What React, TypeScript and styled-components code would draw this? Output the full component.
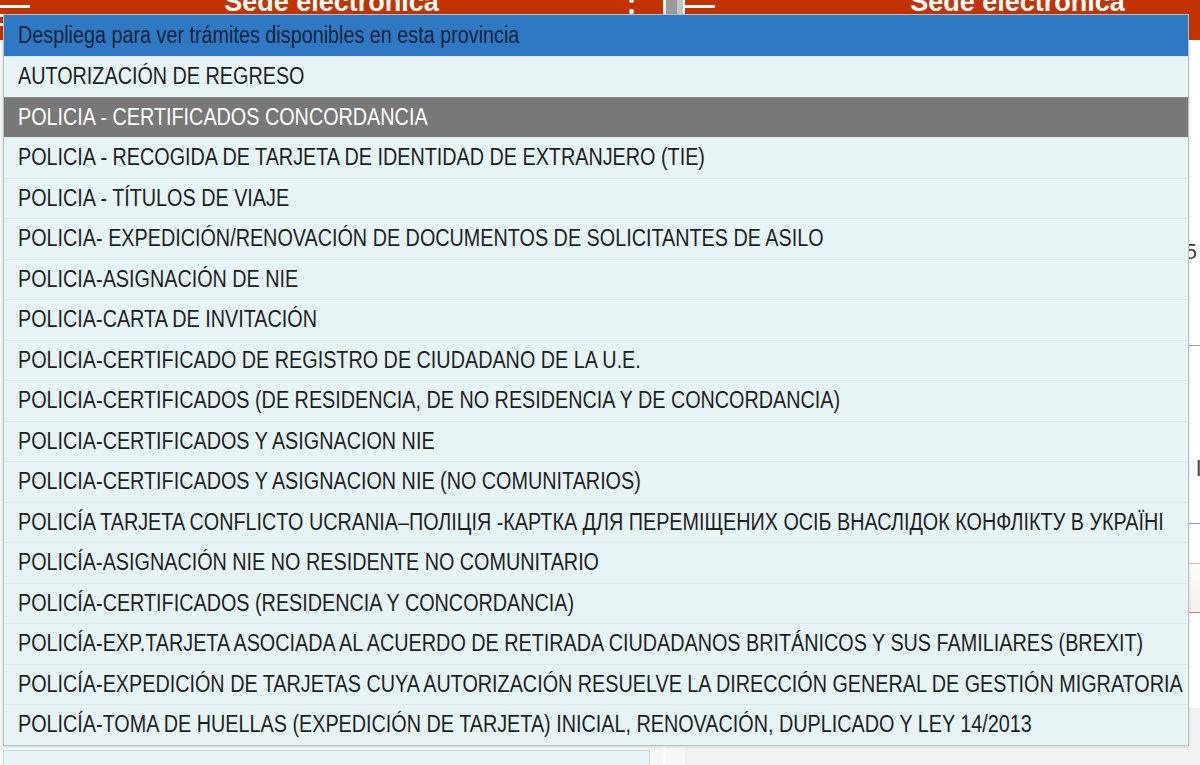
import styled, { createGlobalStyle } from "styled-components";

const tramites = [
  "AUTORIZACIÓN DE REGRESO",
  "POLICIA - CERTIFICADOS CONCORDANCIA",
  "POLICIA - RECOGIDA DE TARJETA DE IDENTIDAD DE EXTRANJERO (TIE)",
  "POLICIA - TÍTULOS DE VIAJE",
  "POLICIA- EXPEDICIÓN/RENOVACIÓN DE DOCUMENTOS DE SOLICITANTES DE ASILO",
  "POLICIA-ASIGNACIÓN DE NIE",
  "POLICIA-CARTA DE INVITACIÓN",
  "POLICIA-CERTIFICADO DE REGISTRO DE CIUDADANO DE LA U.E.",
  "POLICIA-CERTIFICADOS (DE RESIDENCIA, DE NO RESIDENCIA Y DE CONCORDANCIA)",
  "POLICIA-CERTIFICADOS Y ASIGNACION NIE",
  "POLICIA-CERTIFICADOS Y ASIGNACION NIE (NO COMUNITARIOS)",
  "POLICÍA TARJETA CONFLICTO UCRANIA–ПОЛІЦІЯ -КАРТКА ДЛЯ ПЕРЕМІЩЕНИХ ОСІБ ВНАСЛІДОК КОНФЛІКТУ В УКРАЇНІ",
  "POLICÍA-ASIGNACIÓN NIE NO RESIDENTE NO COMUNITARIO",
  "POLICÍA-CERTIFICADOS (RESIDENCIA Y CONCORDANCIA)",
  "POLICÍA-EXP.TARJETA ASOCIADA AL ACUERDO DE RETIRADA CIUDADANOS BRITÁNICOS Y SUS FAMILIARES (BREXIT)",
  "POLICÍA-EXPEDICIÓN DE TARJETAS CUYA AUTORIZACIÓN RESUELVE LA DIRECCIÓN GENERAL DE GESTIÓN MIGRATORIA",
  "POLICÍA-TOMA DE HUELLAS (EXPEDICIÓN DE TARJETA) INICIAL, RENOVACIÓN, DUPLICADO Y LEY 14/2013",
];

const selected = 1;

function App() {
  return (
    <>
      <GlobalStyle />
      <Page>
        <Panel>
          <Header>
            <Hamburger>
              <span />
              <span />
              <span />
            </Hamburger>
            <Title>Sede electrónica</Title>
            <Kebab>
              <i />
              <i />
              <i />
            </Kebab>
          </Header>
          <LeftBody>
            <InfoBox />
          </LeftBody>
        </Panel>

        <Gutter>
          <Thumb />
        </Gutter>

        <Panel>
          <Header>
            <Hamburger>
              <span />
              <span />
              <span />
            </Hamburger>
            <Title>Sede electrónica</Title>
            <Kebab>
              <i />
              <i />
              <i />
            </Kebab>
          </Header>
          <RightBody>
            <Section $height={305}>
              <Line $top={198} $right={153}>Oficina de Extranjería, calle Pintor Velázquez 5</Line>
            </Section>
            <Section $height={178} $border="#7fa6c4">
              <Line $top={110} $right={150}>Pulse para continuar con el trámite o vuelva atrás si lo necesita u</Line>
            </Section>
            <Section $height={40} $border="#7fa6c4" />
            <Button />
            <Section $height={95} />
          </RightBody>
        </Panel>

        <Dropdown>
          <DropHeader>
            <Label>Despliega para ver trámites disponibles en esta provincia</Label>
          </DropHeader>
          {tramites.map((t, i) => (
            <Option key={t} $active={i === selected}>
              <Label>{t}</Label>
            </Option>
          ))}
        </Dropdown>
      </Page>
    </>
  );
}

export default App;

const GlobalStyle = createGlobalStyle`
  html, body {
    margin: 0;
    padding: 0;
    overflow: hidden;
    background: #f2f2f2;
  }
  body {
    font-family: "Liberation Sans", Arial, sans-serif;
  }
`;

const Page = styled.div`
  position: relative;
  width: 1200px;
  height: 765px;
  overflow: hidden;
  display: grid;
  grid-template-columns: 663px 22px 665px;
`;

const Panel = styled.div`
  display: flex;
  flex-direction: column;
  background: #f3f3f3;
  height: 765px;
`;

const Header = styled.div`
  height: 40px;
  flex: none;
  background: #c23300;
  display: grid;
  grid-template-columns: 40px 1fr 40px;
  align-items: start;
  overflow: hidden;
`;

const Hamburger = styled.div`
  display: flex;
  flex-direction: column;
  gap: 6px;
  padding-top: 5px;

  span {
    display: block;
    width: 30px;
    height: 3px;
    background: #ffffff;
  }
`;

const Title = styled.div`
  margin-top: -13px;
  text-align: center;
  color: #ffffff;
  font-weight: 700;
  font-size: 27px;
  line-height: 30px;
  white-space: nowrap;
`;

const Kebab = styled.div`
  display: flex;
  flex-direction: column;
  align-items: center;
  gap: 6px;
  margin-left: -23px;
  margin-top: -2px;

  i {
    display: block;
    width: 5px;
    height: 5px;
    border-radius: 50%;
    background: #ffffff;
  }
`;

const LeftBody = styled.div`
  flex: 1;
  display: flex;
  flex-direction: column;
  justify-content: flex-end;
  padding: 0 13px 0 3px;
  background: #f6f8f8;
`;

const InfoBox = styled.div`
  height: 14px;
  background: #e8f3f5;
  border: 1px solid #c9d5d9;
  border-bottom: none;
`;

const Gutter = styled.div`
  background: #f7f7f7;
  border-left: 3px solid #ffffff;
  display: flex;
  justify-content: flex-start;
`;

const Thumb = styled.div`
  width: 11px;
  height: 44px;
  background: #9a9a9a;
  border-right: 6px solid #c4c4c4;
`;

const RightBody = styled.div`
  flex: 1;
  display: flex;
  flex-direction: column;
  background: #f2f2f2;
`;

const Section = styled.div<{ $height: number; $border?: string }>`
  height: ${(p) => p.$height}px;
  flex: none;
  border-top: 1px solid ${(p) => p.$border || "transparent"};
  box-sizing: border-box;
  background: #ffffff;
`;

const Line = styled.div<{ $top: number; $right: number }>`
  padding-top: ${(p) => p.$top}px;
  padding-right: ${(p) => p.$right}px;
  text-align: right;
  font-size: 22px;
  line-height: 26px;
  color: #444444;
  white-space: nowrap;
`;

const Button = styled.div`
  height: 50px;
  flex: none;
  box-sizing: border-box;
  border-top: 1px solid #e8b49a;
  border-bottom: 1px solid #d77a6a;
  background: linear-gradient(#fdfbfb, #f6f0f0);
`;

const Dropdown = styled.div`
  position: absolute;
  top: 14px;
  left: 3px;
  width: 1186px;
  border: 1px solid #b9c3c7;
  box-sizing: border-box;
  background: #e6f4f6;
  box-shadow: 0 1px 3px rgba(0, 0, 0, 0.15);
`;

const Row = styled.div`
  height: 40.5px;
  display: flex;
  align-items: center;
  padding-left: 14px;
  box-sizing: border-box;
  white-space: nowrap;
  overflow: hidden;
  font-size: 23px;
`;

const DropHeader = styled(Row)`
  height: 41px;
  background: #2f78c4;
  color: #15263a;
`;

const Option = styled(Row)<{ $active?: boolean }>`
  background: ${(p) => (p.$active ? "#787878" : "#e6f4f6")};
  color: ${(p) => (p.$active ? "#ffffff" : "#1e1e1e")};
  border-top: 1px solid ${(p) => (p.$active ? "#8a8a8a" : "#dbe9ec")};
`;

const Label = styled.span`
  display: inline-block;
  transform: scaleX(0.86);
  transform-origin: left center;
`;
